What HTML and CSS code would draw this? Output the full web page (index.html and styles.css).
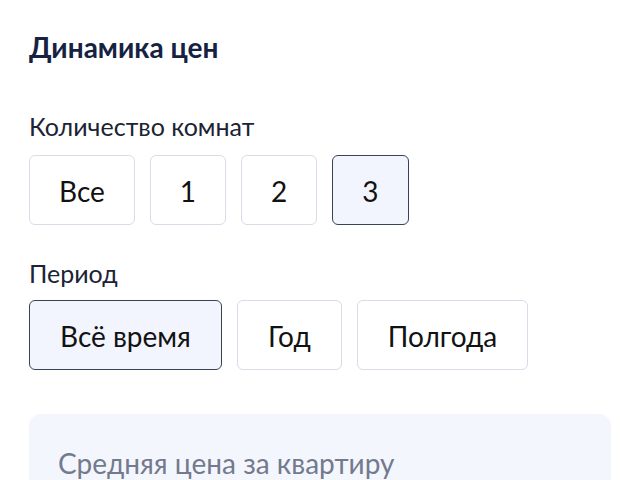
FILE: index.html
```html
<!DOCTYPE html>
<html lang="ru">
<head>
<meta charset="utf-8">
<link rel="stylesheet" href="styles.css">
</head>
<body>
<div class="page">
  <h2 class="title">Динамика цен</h2>
  <div class="label label-rooms">Количество комнат</div>
  <div class="chips chips-rooms">
    <div class="chip">Все</div>
    <div class="chip">1</div>
    <div class="chip">2</div>
    <div class="chip active">3</div>
  </div>
  <div class="label label-period">Период</div>
  <div class="chips chips-period">
    <div class="chip active">Всё время</div>
    <div class="chip">Год</div>
    <div class="chip">Полгода</div>
  </div>
  <div class="panel">
    <div class="panel-text">Средняя цена за квартиру</div>
  </div>
</div>
</body>
</html>
```
FILE: styles.css
```css
html, body {
  margin: 0;
  padding: 0;
  background: #ffffff;
  overflow: hidden;
}
body {
  font-family: Lato, "Noto Sans", sans-serif;
  color: #152242;
}
.page {
  padding: 31px 29px 0 29px;
}
.title {
  margin: 0;
  font-size: 28px;
  line-height: 32px;
  font-weight: 700;
  color: #152242;
}
.label {
  font-size: 25px;
  line-height: 30px;
  color: #1b2334;
}
.label-rooms {
  margin-top: 48px;
}
.label-period {
  margin-top: 33px;
}
.chips {
  display: flex;
  gap: 15px;
}
.chips-rooms {
  margin-top: 14px;
}
.chips-period {
  margin-top: 12px;
}
.chip {
  height: 70px;
  box-sizing: border-box;
  border: 1px solid #d6dde6;
  border-radius: 6px;
  padding: 2px 30px 0 30px;
  display: flex;
  align-items: center;
  font-size: 28px;
  color: #121212;
  background: #fff;
}
.chips-rooms .chip {
  padding-left: 29px;
  padding-right: 29px;
}
.chip.active {
  border: 1px solid #3a4356;
  background: #f2f5fd;
}
.panel {
  margin-top: 44px;
  width: 582px;
  height: 120px;
  background: #f3f6fd;
  border-radius: 12px;
  padding: 32px 29px;
  box-sizing: border-box;
}
.panel-text {
  font-size: 28px;
  line-height: 34px;
  color: #737a8d;
}
```
